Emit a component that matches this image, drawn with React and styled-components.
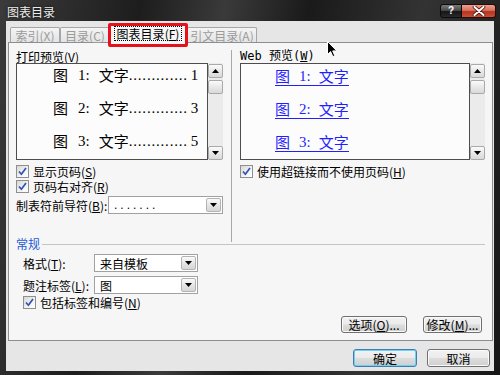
import React from 'react';
import styled, { createGlobalStyle } from 'styled-components';

const Global = createGlobalStyle`
  html, body { margin: 0; padding: 0; width: 500px; height: 375px; overflow: hidden; background: #222; }
  * { box-sizing: border-box; }
`;

const UI_FONT = `"Noto Sans CJK SC", "Liberation Sans", sans-serif`;

const Window = styled.div`
  position: relative;
  width: 500px;
  height: 375px;
  display: flex;
  flex-direction: column;
  background: linear-gradient(100deg, #3b3b3b 0%, #1d1d1d 25%, #3a3a3a 40%, #1a1a1a 55%, #333 75%, #161616 100%);
  font-family: ${UI_FONT};
  font-size: 12px;
  color: #000;
`;

const TitleBar = styled.div`
  height: 21px;
  flex: none;
  display: flex;
  align-items: flex-start;
  padding-left: 7px;
`;

const TitleText = styled.div`
  color: #ececec;
  font-size: 12px;
  line-height: 13px;
  margin-top: 5px;
  text-shadow: 0 0 3px rgba(0,0,0,0.8);
`;

const TitleButtons = styled.div`
  margin-left: auto;
  margin-top: 4px;
  margin-right: 4px;
  display: flex;
`;

const HelpButton = styled.div`
  width: 22px;
  height: 14px;
  border: 1px solid #0c0c0c;
  border-radius: 3px 0 0 3px;
  background: linear-gradient(180deg, #7a7a7a 0%, #4a4a4a 45%, #161616 55%, #2a2a2a 100%);
  display: flex;
  align-items: center;
  justify-content: center;
  color: #fff;
  font-family: "Liberation Sans", sans-serif;
  font-weight: bold;
  font-size: 10px;
  line-height: 10px;
`;

const CloseButton = styled.div`
  width: 34px;
  height: 14px;
  border: 1px solid #2a0a06;
  border-left: none;
  border-radius: 0 3px 3px 0;
  background: linear-gradient(180deg, #eba191 0%, #d8705c 45%, #b7331f 55%, #c9503a 100%);
  display: flex;
  align-items: center;
  justify-content: center;
`;

const Client = styled.div`
  flex: 1;
  margin: 0 6px 4px 6px;
  background: #e6e6e6;
  display: flex;
  flex-direction: column;
  padding-top: 3px;
  padding-bottom: 4px;
`;

const TabRow = styled.div`
  height: 19px;
  display: flex;
  align-items: flex-end;
  padding-left: 4px;
  position: relative;
  z-index: 2;
`;

const Tab = styled.div`
  width: ${p => p.$w}px;
  height: ${p => (p.$active ? 19 : 15)}px;
  margin-bottom: ${p => (p.$active ? 0 : 1)}px;
  border: 1px solid ${p => (p.$active ? '#8b8e95' : '#a6a6a6')};
  border-bottom: none;
  border-radius: 2px 2px 0 0;
  background: ${p => (p.$active ? '#f6f6f6' : 'linear-gradient(180deg, #f4f4f4 0%, #e4e4e4 100%)')};
  color: ${p => (p.$active ? '#000' : '#9b9b9b')};
  display: flex;
  align-items: center;
  justify-content: center;
  line-height: 13px;
  padding-bottom: ${p => (p.$active ? 2 : 0)}px;
  margin-left: ${p => (p.$active ? -1 : 0)}px;
  position: relative;
  z-index: ${p => (p.$active ? 2 : 1)};
`;

const FocusText = styled.span`
  outline: 1px dotted #000;
  outline-offset: 0;
  padding: 0 2px;
  line-height: 13px;
`;

const Panel = styled.div`
  height: 299px;
  margin: -1px 1px 0 2px;
  border: 1px solid #8b8e95;
  background: #f6f6f6;
  padding: 7px 7px 0 7px;
  display: flex;
  flex-direction: column;
  position: relative;
  z-index: 1;
`;

const TopGrid = styled.div`
  display: grid;
  grid-template-columns: 207px 1px 245px;
  column-gap: 8px;
  height: 187px;
`;

const Column = styled.div`
  display: flex;
  flex-direction: column;
`;

const VSeparator = styled.div`
  background: #a9a9a9;
  margin-bottom: -5px;
`;

const Label = styled.div`
  height: 13px;
  line-height: 13px;
  white-space: nowrap;
  width: ${p => (p.$w ? `${p.$w}px` : 'auto')};
  flex: none;
  font-family: ${p => (p.$mono ? `"DejaVu Sans Mono", ${UI_FONT}` : UI_FONT)};
`;

const Preview = styled.div`
  height: 97px;
  display: flex;
`;

const PreviewBox = styled.div`
  flex: 1;
  border: 1px solid #4d4d4d;
  background: #fcfcfc;
  display: flex;
  flex-direction: column;
  gap: 11px;
`;

const Entry = styled.div`
  height: 22px;
  display: flex;
  align-items: center;
  padding-left: 36px;
  font-size: 15px;
  white-space: nowrap;
`;

const Piece = styled.span`
  margin-right: ${p => p.$mr || 0}px;
  font-family: ${p => (p.$cjk ? `"Noto Sans CJK SC", sans-serif` : `"Liberation Serif", serif`)};
  line-height: 18px;
`;

const Leader = styled.span`
  letter-spacing: 0.8px;
  font-family: "Liberation Serif", serif;
  line-height: 18px;
  margin-right: 3px;
`;

const WebEntry = styled.div`
  height: 22px;
  display: flex;
  align-items: center;
  padding-left: 34px;
  font-size: 15px;
`;

const Link = styled.span`
  display: inline-flex;
  align-items: center;
  color: #1f1fff;
  border-bottom: 1px solid #1f1fff;
  height: 19px;
  margin-top: 2px;
`;

const Scrollbar = styled.div`
  width: 15px;
  background: #ebebeb;
  display: flex;
  flex-direction: column;
  padding-top: 1px;
`;

const ScrollButton = styled.div`
  height: ${p => p.$h || 15}px;
  border: 1px solid #a9a9a9;
  border-radius: 2px;
  background: linear-gradient(180deg, #fbfbfb 0%, #e8e8e8 50%, #d9d9d9 100%);
  display: flex;
  align-items: center;
  justify-content: center;
  margin-top: ${p => p.$mt || 0}px;
`;

const Spacer = styled.div`
  flex: 1;
`;

const CheckRow = styled.div`
  height: 14px;
  display: flex;
  align-items: center;
  gap: 4px;
  margin-top: ${p => p.$mt || 0}px;
  padding-left: ${p => p.$pl || 0}px;
`;

const CheckBox = styled.div`
  width: 13px;
  height: 13px;
  border: 1px solid #8f8f8f;
  background: linear-gradient(135deg, #d6d6d6 0%, #f4f4f4 60%, #ffffff 100%);
  display: flex;
  align-items: center;
  justify-content: center;
  flex: none;
`;

const FieldRow = styled.div`
  height: 18px;
  display: flex;
  align-items: center;
  margin-top: ${p => p.$mt || 0}px;
  padding-left: ${p => p.$pl || 0}px;
`;

const Select = styled.div`
  width: ${p => p.$w}px;
  height: 18px;
  border: 1px solid #a1a1a1;
  background: #fff;
  display: flex;
  align-items: center;
  padding: 1px;
`;

const SelectText = styled.div`
  flex: 1;
  padding-left: 4px;
  line-height: 13px;
  letter-spacing: ${p => (p.$dots ? '3px' : '0')};
  font-family: ${p => (p.$dots ? `"Liberation Sans", sans-serif` : UI_FONT)};
`;

const DropButton = styled.div`
  width: 15px;
  height: 14px;
  border: 1px solid #b3b3b3;
  border-radius: 2px;
  background: linear-gradient(180deg, #fafafa 0%, #e6e6e6 50%, #d6d6d6 100%);
  display: flex;
  align-items: center;
  justify-content: center;
`;

const General = styled.div`
  display: flex;
  flex-direction: column;
`;

const Legend = styled.div`
  height: 13px;
  display: flex;
  align-items: center;
  gap: 2px;
  width: 469px;
`;

const LegendText = styled.span`
  color: #1e5bd6;
  line-height: 13px;
`;

const LegendLine = styled.div`
  flex: 1;
  height: 1px;
  background: #c4c4c4;
  margin-top: 1px;
`;

const ButtonRow = styled.div`
  display: flex;
  justify-content: flex-end;
  gap: ${p => p.$gap}px;
  margin-top: ${p => p.$mt}px;
  padding-right: ${p => p.$pr}px;
`;

const Button = styled.div`
  width: ${p => p.$w}px;
  height: ${p => p.$h}px;
  border: 1px solid ${p => (p.$focus ? '#3c7fb1' : '#707070')};
  border-radius: 3px;
  background: linear-gradient(180deg, #f2f2f2 0%, #ebebeb 48%, #dddddd 52%, #cfcfcf 100%);
  box-shadow: ${p => (p.$focus ? 'inset 0 0 0 1px #6fd0f5' : 'inset 0 0 0 1px #fafafa')};
  display: flex;
  align-items: center;
  justify-content: center;
  line-height: 13px;
`;

const Highlight = styled.div`
  position: absolute;
  left: 108px;
  top: 23px;
  width: 80px;
  height: 24px;
  border: 3px solid #e5121b;
  border-radius: 2px;
  z-index: 5;
  pointer-events: none;
`;

const Cursor = styled.svg`
  position: absolute;
  left: 327px;
  top: 41px;
  z-index: 6;
`;

const Mn = ({ k }) => (
  <span>(<u>{k}</u>)</span>
);

const Tri = ({ up }) => (
  <svg width="7" height="4" viewBox="0 0 7 4">
    <polygon points={up ? '0,4 7,4 3.5,0' : '0,0 7,0 3.5,4'} fill="#000" />
  </svg>
);

const Check = ({ label }) => (
  <>
    <CheckBox>
      <svg width="9" height="9" viewBox="0 0 9 9">
        <path d="M1 4.5 L3.4 7.2 L8 1" stroke="#2d52b4" strokeWidth="1.7" fill="none" />
      </svg>
    </CheckBox>
    <Label>{label}</Label>
  </>
);

const Dropdown = ({ w, text, dots }) => (
  <Select $w={w}>
    <SelectText $dots={dots}>{text}</SelectText>
    <DropButton><Tri /></DropButton>
  </Select>
);

const Scroll = () => (
  <Scrollbar>
    <ScrollButton $h={14}><Tri up /></ScrollButton>
    <ScrollButton $h={14} $mt={2} />
    <Spacer />
    <ScrollButton $h={14}><Tri /></ScrollButton>
  </Scrollbar>
);

const entries = [
  { n: 1, p: 1 },
  { n: 2, p: 3 },
  { n: 3, p: 5 },
];

export default function App() {
  return (
    <>
      <Global />
      <Window>
        <TitleBar>
          <TitleText>图表目录</TitleText>
          <TitleButtons>
            <HelpButton>?</HelpButton>
            <CloseButton>
              <svg width="14" height="10" viewBox="0 0 14 10">
                <path d="M2.5 1 L11.5 9 M11.5 1 L2.5 9" stroke="#4a1208" strokeWidth="3.6" strokeLinecap="round" />
                <path d="M2.5 1 L11.5 9 M11.5 1 L2.5 9" stroke="#fff" strokeWidth="2" strokeLinecap="round" />
              </svg>
            </CloseButton>
          </TitleButtons>
        </TitleBar>
        <Client>
          <TabRow>
            <Tab $w={50}>索引<Mn k="X" /></Tab>
            <Tab $w={50}>目录<Mn k="C" /></Tab>
            <Tab $w={78} $active><FocusText>图表目录<Mn k="F" /></FocusText></Tab>
            <Tab $w={70}>引文目录<Mn k="A" /></Tab>
          </TabRow>
          <Panel>
            <TopGrid>
              <Column>
                <Label>打印预览<Mn k="V" /></Label>
                <Preview>
                  <PreviewBox>
                    {entries.map(e => (
                      <Entry key={e.n}>
                        <Piece $cjk $mr={10}>图</Piece>
                        <Piece $mr={9}>{e.n}:</Piece>
                        <Piece $cjk>文字</Piece>
                        <Leader>.............</Leader>
                        <Piece>{e.p}</Piece>
                      </Entry>
                    ))}
                  </PreviewBox>
                  <Scroll />
                </Preview>
                <CheckRow $mt={4}><Check label={<>显示页码<Mn k="S" /></>} /></CheckRow>
                <CheckRow $mt={1}><Check label={<>页码右对齐<Mn k="R" /></>} /></CheckRow>
                <FieldRow $mt={3}>
                  <Label $w={92}>制表符前导符<Mn k="B" />:</Label>
                  <Dropdown w={115} text="......." dots />
                </FieldRow>
              </Column>
              <VSeparator />
              <Column>
                <Label $mono>Web 预览<Mn k="W" /></Label>
                <Preview>
                  <PreviewBox>
                    {entries.map(e => (
                      <WebEntry key={e.n}>
                        <Link>
                          <Piece $cjk $mr={9}>图</Piece>
                          <Piece $mr={8}>{e.n}:</Piece>
                          <Piece $cjk>文字</Piece>
                        </Link>
                      </WebEntry>
                    ))}
                  </PreviewBox>
                  <Scroll />
                </Preview>
                <CheckRow $mt={4}><Check label={<>使用超链接而不使用页码<Mn k="H" /></>} /></CheckRow>
              </Column>
            </TopGrid>
            <General>
              <Legend>
                <LegendText>常规</LegendText>
                <LegendLine />
              </Legend>
              <FieldRow $mt={4} $pl={7}>
                <Label $w={71}>格式<Mn k="T" />:</Label>
                <Dropdown w={104} text="来自模板" />
              </FieldRow>
              <FieldRow $mt={4} $pl={7}>
                <Label $w={71}>题注标签<Mn k="L" />:</Label>
                <Dropdown w={104} text="图" />
              </FieldRow>
              <CheckRow $mt={1} $pl={7}><Check label={<>包括标签和编号<Mn k="N" /></>} /></CheckRow>
              <ButtonRow $gap={16} $mt={7} $pr={3}>
                <Button $w={66} $h={17}>选项<Mn k="O" />...</Button>
                <Button $w={59} $h={17}>修改<Mn k="M" />...</Button>
              </ButtonRow>
            </General>
          </Panel>
          <ButtonRow $gap={10} $mt={8} $pr={4}>
            <Button $w={64} $h={18} $focus>确定</Button>
            <Button $w={63} $h={18}>取消</Button>
          </ButtonRow>
        </Client>
        <Highlight />
        <Cursor width="11" height="17" viewBox="0 0 11 17">
          <path d="M0.5 0.5 L0.5 13.5 L3.6 10.6 L5.8 15.6 L7.8 14.8 L5.7 9.9 L9.8 9.9 Z" fill="#000" stroke="#fff" strokeWidth="1" />
        </Cursor>
      </Window>
    </>
  );
}
